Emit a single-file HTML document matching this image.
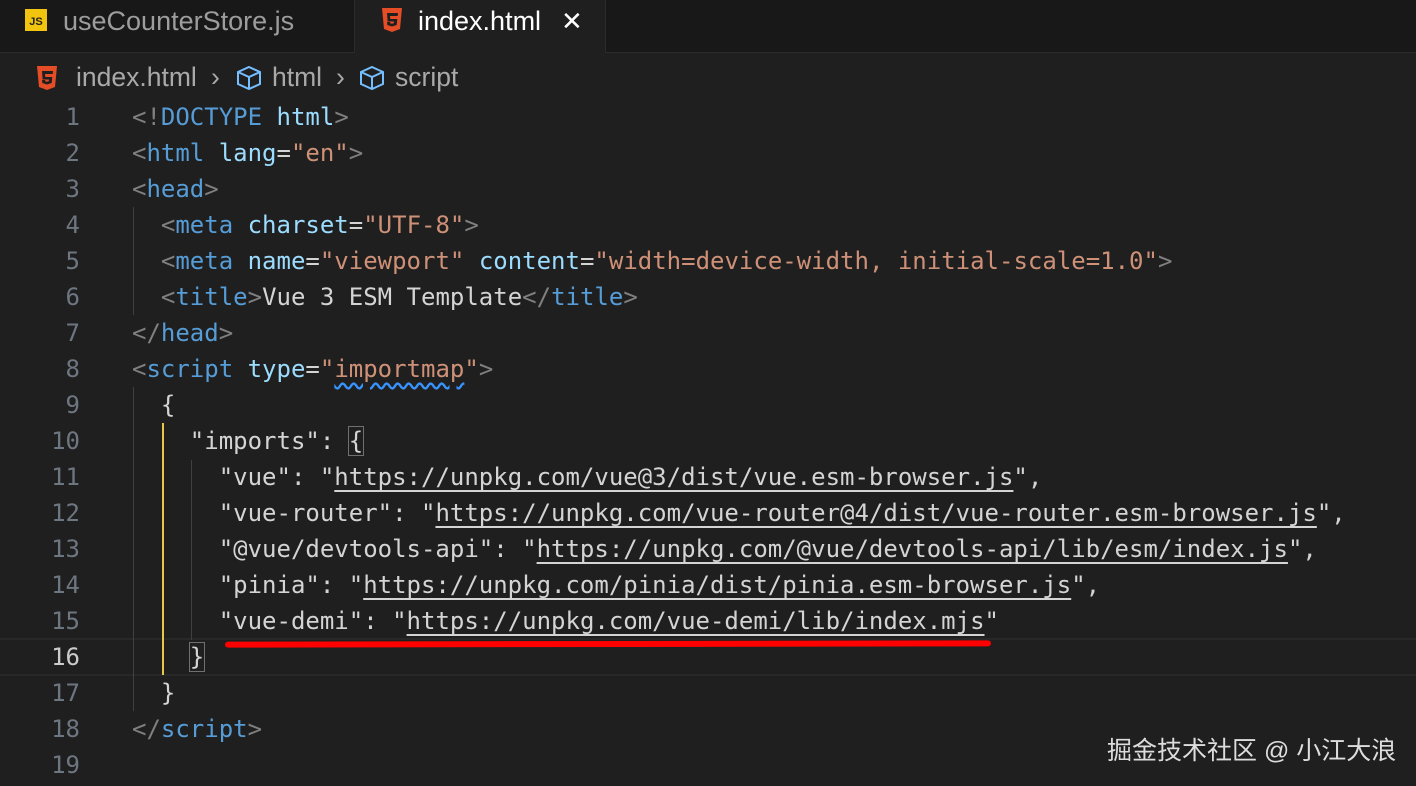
<!DOCTYPE html>
<html style="overflow:hidden;height:786px"><head><meta charset="utf-8"><style>
body{margin:0;width:1416px;height:786px;background:#1f1f1f;overflow:hidden;position:relative;font-family:"Liberation Sans",sans-serif}
.tabs{position:absolute;left:0;top:0;width:1416px;height:52px;background:#181818;border-bottom:1px solid #2b2b2b}
.tab{position:absolute;top:0;height:52px;font-size:27px;line-height:42px}
.t1{left:0;width:354px;color:#9d9d9d;border-right:1px solid #2b2b2b}
.t2{left:355px;width:250px;background:#1f1f1f;color:#fff;height:53px;border-right:1px solid #2b2b2b}
.bc{position:absolute;top:58px;left:0;font-size:26.5px;color:#a9a9a9;line-height:38px;width:600px;height:40px}
.code{position:absolute;left:0;top:99px;font-family:"DejaVu Sans Mono","Liberation Mono",monospace;font-size:24px;line-height:36px;white-space:pre;color:#d4d4d4}
.ln{position:absolute;left:0;width:80px;text-align:right;color:#6e7681}
.tx{position:absolute;left:132px}
.p{color:#808080}.t{color:#569cd6}.a{color:#9cdcfe}.s{color:#ce9178}
u{text-decoration:underline;text-underline-offset:5px;text-decoration-thickness:2px}
.g{position:absolute;width:1px;background:#404040}
</style></head><body>
<div class="tabs">
<div class="tab t1"><span style="position:absolute;left:25px;top:9px;width:22px;height:22px;background:#f1c40f;color:#222;font-size:11px;line-height:26px;text-align:center;font-weight:bold">JS</span><span style="position:absolute;left:63px;top:0">useCounterStore.js</span></div>
<div class="tab t2"><svg style="position:absolute;left:26px;top:8px" width="22" height="24" viewBox="0 0 22 24"><path d="M1 0h20l-2 21-8 3-8-3z" fill="#e44d26"/><path d="M6 5h11l-.3 3H9l.3 3h7l-.6 6-4.7 1.5L6.3 17l-.2-3h3l.1 1.3 1.8.5 1.8-.5.2-1.8H6.6z" fill="#1f1f1f"/></svg><span style="position:absolute;left:63px">index.html</span><span style="position:absolute;left:206px;font-size:26px">✕</span></div>
</div>
<div class="bc"><svg style="position:absolute;left:36px;top:8px" width="22" height="24" viewBox="0 0 22 24"><path d="M1 0h20l-2 21-8 3-8-3z" fill="#e44d26"/><path d="M6 5h11l-.3 3H9l.3 3h7l-.6 6-4.7 1.5L6.3 17l-.2-3h3l.1 1.3 1.8.5 1.8-.5.2-1.8H6.6z" fill="#1f1f1f"/></svg>
<span style="position:absolute;left:76px;white-space:nowrap">index.html</span><span style="position:absolute;left:211px">›</span>
<svg style="position:absolute;left:235px;top:7px" width="28" height="26" viewBox="0 0 28 26" fill="none" stroke="#75beff" stroke-width="2"><path d="M14 2l11 5v12l-11 5-11-5V7z M3 7l11 5 11-5 M14 12v12"/></svg>
<span style="position:absolute;left:272px">html</span><span style="position:absolute;left:336px">›</span>
<svg style="position:absolute;left:358px;top:7px" width="28" height="26" viewBox="0 0 28 26" fill="none" stroke="#75beff" stroke-width="2"><path d="M14 2l11 5v12l-11 5-11-5V7z M3 7l11 5 11-5 M14 12v12"/></svg>
<span style="position:absolute;left:395px">script</span></div>
<div style="position:absolute;left:0;top:638px;width:1416px;height:34px;border-top:2px solid #282828;border-bottom:2px solid #282828"></div>
<div class="g" style="left:133px;top:207px;height:108px"></div>
<div class="g" style="left:133px;top:387px;height:324px"></div>
<div class="g" style="left:162px;top:423px;height:252px;background:#e6c84a;width:2px"></div>
<div class="g" style="left:191px;top:460px;height:180px"></div>
<div class="code">
<div class="ln" style="top:0">1</div><div class="tx" style="top:0"><span class="p">&lt;!</span><span class="t">DOCTYPE</span> <span class="a">html</span><span class="p">&gt;</span></div>
<div class="ln" style="top:36px">2</div><div class="tx" style="top:36px"><span class="p">&lt;</span><span class="t">html</span> <span class="a">lang</span>=<span class="s">"en"</span><span class="p">&gt;</span></div>
<div class="ln" style="top:72px">3</div><div class="tx" style="top:72px"><span class="p">&lt;</span><span class="t">head</span><span class="p">&gt;</span></div>
<div class="ln" style="top:108px">4</div><div class="tx" style="top:108px">  <span class="p">&lt;</span><span class="t">meta</span> <span class="a">charset</span>=<span class="s">"UTF-8"</span><span class="p">&gt;</span></div>
<div class="ln" style="top:144px">5</div><div class="tx" style="top:144px">  <span class="p">&lt;</span><span class="t">meta</span> <span class="a">name</span>=<span class="s">"viewport"</span> <span class="a">content</span>=<span class="s">"width=device-width, initial-scale=1.0"</span><span class="p">&gt;</span></div>
<div class="ln" style="top:180px">6</div><div class="tx" style="top:180px">  <span class="p">&lt;</span><span class="t">title</span><span class="p">&gt;</span>Vue 3 ESM Template<span class="p">&lt;/</span><span class="t">title</span><span class="p">&gt;</span></div>
<div class="ln" style="top:216px">7</div><div class="tx" style="top:216px"><span class="p">&lt;/</span><span class="t">head</span><span class="p">&gt;</span></div>
<div class="ln" style="top:252px">8</div><div class="tx" style="top:252px"><span class="p">&lt;</span><span class="t">script</span> <span class="a">type</span>=<span class="s">"<span style="text-decoration:underline wavy #3794ff;text-underline-offset:5px">importmap</span>"</span><span class="p">&gt;</span></div>
<div class="ln" style="top:288px">9</div><div class="tx" style="top:288px">  {</div>
<div class="ln" style="top:324px">10</div><div class="tx" style="top:324px">    "imports": <span style="outline:1px solid #707070">{</span></div>
<div class="ln" style="top:360px">11</div><div class="tx" style="top:360px">      "vue": "<u>https://unpkg.com/vue@3/dist/vue.esm-browser.js</u>",</div>
<div class="ln" style="top:396px">12</div><div class="tx" style="top:396px">      "vue-router": "<u>https://unpkg.com/vue-router@4/dist/vue-router.esm-browser.js</u>",</div>
<div class="ln" style="top:432px">13</div><div class="tx" style="top:432px">      "@vue/devtools-api": "<u>https://unpkg.com/@vue/devtools-api/lib/esm/index.js</u>",</div>
<div class="ln" style="top:468px">14</div><div class="tx" style="top:468px">      "pinia": "<u>https://unpkg.com/pinia/dist/pinia.esm-browser.js</u>",</div>
<div class="ln" style="top:504px">15</div><div class="tx" style="top:504px">      "vue-demi": "<u>https://unpkg.com/vue-demi/lib/index.mjs</u>"</div>
<div class="ln" style="top:540px;color:#ccc">16</div><div class="tx" style="top:540px">    <span style="outline:1px solid #707070">}</span></div>
<div class="ln" style="top:576px">17</div><div class="tx" style="top:576px">  }</div>
<div class="ln" style="top:612px">18</div><div class="tx" style="top:612px"><span class="p">&lt;/</span><span class="t">script</span><span class="p">&gt;</span></div>
<div class="ln" style="top:648px">19</div>
</div>
<div style="position:absolute;left:225px;top:641px;width:766px;height:6px;background:#f00;border-radius:3px;transform:rotate(-0.1deg)"></div>
<div style="position:absolute;left:1107px;top:731px;font-family:'Liberation Sans','Noto Sans CJK SC',sans-serif;font-size:25px;color:#ddd;white-space:nowrap">掘金技术社区 @ 小江大浪</div>
</body></html>
